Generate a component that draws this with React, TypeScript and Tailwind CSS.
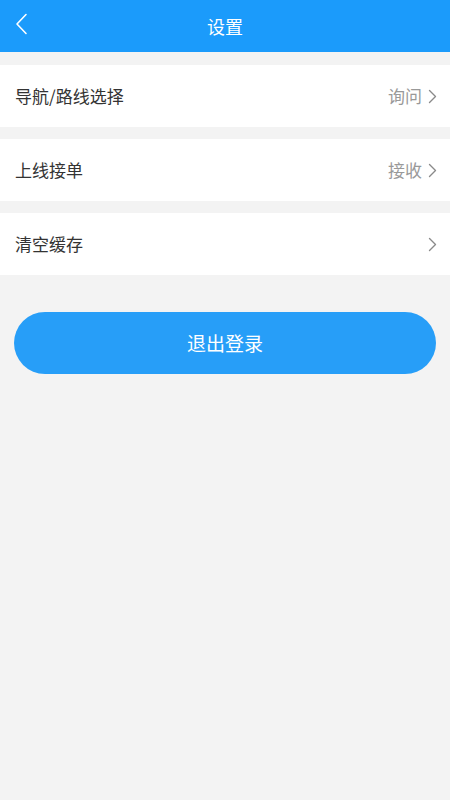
import React from "react";

const Chevron = () => (
  <svg width="9" height="15" viewBox="0 0 9 15" fill="none" className="ml-[6px]">
    <path d="M1.5 1.5 L7.5 7.5 L1.5 13.5" stroke="#8a8a8a" strokeWidth="1.4" strokeLinecap="round" strokeLinejoin="round" />
  </svg>
);

const Row = ({ label, value }: { label: string; value?: string }) => (
  <div className="flex h-[62px] items-center justify-between bg-white pl-[15px] pr-[13px]">
    <span className="text-[17px] text-[#333333]">{label}</span>
    <div className="flex items-center">
      {value && <span className="text-[17px] text-[#999999]">{value}</span>}
      <Chevron />
    </div>
  </div>
);

export default function App() {
  return (
    <div
      className="flex min-h-[800px] w-full flex-col bg-[#f3f3f3]"
      style={{ fontFamily: '"Noto Sans CJK SC", "Noto Sans", sans-serif' }}
    >
      <div className="relative flex h-[52px] items-center justify-center bg-[#1b9bfb]">
        <svg width="14" height="22" viewBox="0 0 14 22" fill="none" className="absolute left-[15px] top-[13px]">
          <path d="M11 1.5 L2 11 L11 20.5" stroke="#ffffff" strokeWidth="1.6" strokeLinecap="round" strokeLinejoin="round" />
        </svg>
        <span className="text-[18px] text-white">设置</span>
      </div>
      <div className="mt-[13px] flex flex-col gap-[12px]">
        <Row label="导航/路线选择" value="询问" />
        <Row label="上线接单" value="接收" />
        <Row label="清空缓存" />
      </div>
      <div className="px-[14px] pt-[37px]">
        <button className="flex h-[62px] w-full items-center justify-center rounded-full bg-[#279ef8] text-[19px] text-white">
          退出登录
        </button>
      </div>
    </div>
  );
}
